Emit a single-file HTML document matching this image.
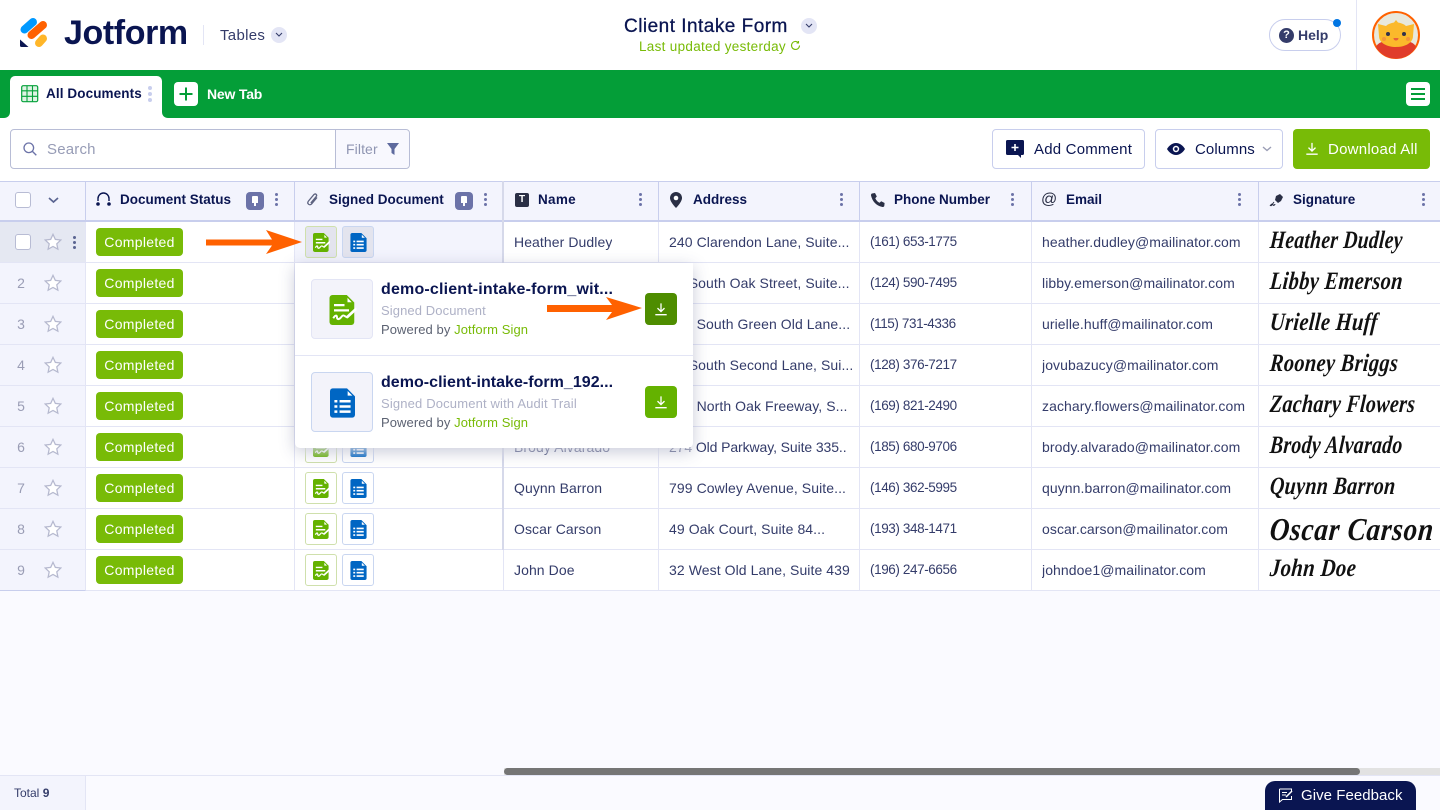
<!DOCTYPE html>
<html><head><meta charset="utf-8"><title>Client Intake Form</title>
<style>
*{box-sizing:border-box}
html,body{margin:0;padding:0;width:1440px;height:810px;overflow:hidden;background:#fafaff;font-family:"Liberation Sans",sans-serif;color:#0a1551}
.a{position:absolute}
.t{position:absolute;white-space:nowrap}
svg{display:block;position:absolute;overflow:visible}
.hd{position:absolute;top:181px;height:41px;background:#f3f4fd;border-top:1px solid #c8ceed;border-bottom:2px solid #c8ceed;border-right:1px solid #c8ceed}
.hl{position:absolute;top:9px;font-size:13.500px;line-height:18px;font-weight:bold;color:#0a1551;white-space:nowrap;letter-spacing:0}
.dots{position:absolute;width:3px;height:3px;border-radius:50%;background:#6c73a8;box-shadow:0 5px 0 #6c73a8,0 10px 0 #6c73a8}
.pin{position:absolute;top:10px;width:18px;height:18px;border-radius:4px;background:#6c73a8}
.pin:before{content:"";position:absolute;left:6px;top:4px;width:6px;height:7px;background:#fff;border-radius:1px 1px 0 0}
.pin:after{content:"";position:absolute;left:8px;top:10px;width:2px;height:4px;background:#fff}
.row{position:absolute;left:0;width:1440px;height:41px;background:#fff;border-bottom:1px solid #e3e5f5}
.rh{position:absolute;left:0;top:0;width:86px;height:41px;background:#f3f4fd;border-right:1px solid #e3e5f5;border-bottom:1px solid #e3e5f5}
.n{position:absolute;left:11px;width:20px;text-align:center;top:11px;font-size:14px;line-height:18px;color:#9a9db5}
.badge{position:absolute;left:96px;top:6px;width:87px;height:28px;border-radius:4px;background:#78bb07;color:#fff;font-size:14px;line-height:28px;text-align:center;letter-spacing:.3px}
.ib{position:absolute;top:4px;width:32px;height:32px;border-radius:3px;background:#fff}
.ib.g{left:305px;border:1px solid #cfe0ac}
.ib.b{left:342px;border:1px solid #c9d6f0}
.ib svg{left:7px;top:6px}
.v{position:absolute;top:0;width:1px;height:41px;background:#e3e5f5}
.d{position:absolute;top:11px;font-size:14px;line-height:18px;color:#343c6a;white-space:nowrap;letter-spacing:.08px;overflow:hidden}
.p{left:870px;font-size:13.500px;letter-spacing:-.4px}
.s{position:absolute;left:1270px;top:0;font-family:"Liberation Serif",serif;font-style:italic;font-weight:bold;font-size:25px;line-height:38px;color:#111;white-space:nowrap;letter-spacing:.4px;transform-origin:0 50%;transform:scaleX(.8) skewX(-6deg)}
.btn{position:absolute;top:129px;height:40px;border:1px solid #c8ceed;border-radius:4px;background:#fff}
.pi{position:absolute;left:16px;width:62px;height:60px;border-radius:4px;background:#f3f3fa;border:1px solid #e3e5f5}
.dl{position:absolute;left:350px;width:32px;height:32px;border-radius:4px;background:#64b200}
</style></head><body>
<svg width="0" height="0" style="position:absolute">
<defs>
<symbol id="gd" viewBox="0 0 18 20"><path fill="#64b200" d="M2 0h9.500L16.500 5V18a2 2 0 0 1-2 2H2a2 2 0 0 1-2-2V2a2 2 0 0 1 2-2z"/><path fill="#fff" d="M12 1.800 14.800 4.800H12z"/><path fill="#fff" d="M3 6h7v1.500H3zM3 9.500h10V11H3z"/><path fill="none" stroke="#fff" stroke-width="1.300" d="M2.500 15.500c1.500-2.500 2.500-2 2.500-.5s1.500 1.500 3-.5 2 0 4 .5"/><path fill="none" stroke="#fff" stroke-width="1.800" d="M11.500 15 18 9"/></symbol>
<symbol id="bd" viewBox="0 0 17 20"><path fill="#0066c3" d="M2 0h9.500L17 5.500V18a2 2 0 0 1-2 2H2a2 2 0 0 1-2-2V2a2 2 0 0 1 2-2z"/><path fill="#fff" d="M12 1.800 15.200 5H12z"/><path fill="#fff" d="M3 8h2v1.700H3zM6.500 8h7.500v1.700H6.500zM3 11.500h2v1.700H3zM6.500 11.500h7.500v1.700H6.500zM3 15h2v1.700H3zM6.500 15h7.500v1.700H6.500z"/></symbol>
<symbol id="st" viewBox="0 0 20 20"><path fill="#fff" stroke="#b6b9cf" stroke-width="1.400" d="M10 1.500l2.600 5.600 6 .7-4.400 4.200 1.200 6L10 15l-5.400 3 1.200-6L1.400 7.800l6-.7z"/></symbol>
<symbol id="dn" viewBox="0 0 16 16"><path fill="none" stroke="#fff" stroke-width="1.500" d="M8 1.500v9M4 7l4 4 4-4M1.500 14.500h13"/></symbol>
</defs></svg>

<!-- top header -->
<div class="a" style="left:0;top:0;width:1440px;height:70px;background:#fff"></div>
<svg style="left:18px;top:15px" width="32" height="34" viewBox="0 0 32 34">
<path stroke="#0099ff" stroke-width="8" stroke-linecap="round" d="M6.500 14.500 15 7"/>
<path stroke="#ff6100" stroke-width="8" stroke-linecap="round" d="M13.500 20 25 10"/>
<path stroke="#ffb629" stroke-width="8" stroke-linecap="round" d="M21 28 25 23.500"/>
<path fill="#0a1551" d="M2 24.500 10.500 32H3.500A1.500 1.500 0 0 1 2 30.500z"/>
</svg>
<div class="t" style="left:64px;top:15px;font-size:34px;line-height:36px;font-weight:bold;letter-spacing:-.4px">Jotform</div>
<div class="a" style="left:203px;top:25px;width:1px;height:20px;background:#e3e5f5"></div>
<div class="t" style="left:220px;top:27px;font-size:15px;line-height:18px;color:#343c6a;letter-spacing:.3px">Tables</div>
<div class="a" style="left:271px;top:27px;width:16px;height:16px;border-radius:50%;background:#e3e5f5"></div>
<svg style="left:275px;top:32px" width="8" height="6" viewBox="0 0 8 6"><path fill="none" stroke="#343c6a" stroke-width="1.100" d="M1 1l3 3 3-3"/></svg>

<div class="t" style="left:624px;top:15px;font-size:19px;line-height:23px;letter-spacing:.48px;-webkit-text-stroke:.3px #0a1551">Client Intake Form</div>
<div class="a" style="left:801px;top:18px;width:16px;height:16px;border-radius:50%;background:#e3e5f5"></div>
<svg style="left:805px;top:23px" width="8" height="6" viewBox="0 0 8 6"><path fill="none" stroke="#343c6a" stroke-width="1.100" d="M1 1l3 3 3-3"/></svg>
<div class="t" style="left:639px;top:38px;font-size:13.500px;line-height:17px;color:#78bb07;letter-spacing:.3px">Last updated yesterday</div>
<svg style="left:790px;top:40px" width="11" height="11" viewBox="0 0 11 11"><path fill="none" stroke="#78bb07" stroke-width="1.100" d="M9.500 5.500a4 4 0 1 1-1.200-2.900M8.500 1v2h-2"/></svg>

<div class="a" style="left:1269px;top:19px;width:72px;height:32px;border-radius:16px;border:1px solid #c8ceed;background:#fff"></div>
<div class="a" style="left:1279px;top:28px;width:15px;height:15px;border-radius:50%;background:#343c6a;color:#fff;font-size:11px;line-height:15px;text-align:center;font-weight:bold">?</div>
<div class="t" style="left:1298px;top:26px;font-size:14px;line-height:18px;color:#343c6a;font-weight:bold">Help</div>
<div class="a" style="left:1333px;top:19px;width:8px;height:8px;border-radius:50%;background:#0075e3"></div>
<div class="a" style="left:1356px;top:0;width:1px;height:70px;background:#e3e5f5"></div>
<svg style="left:1372px;top:11px" width="48" height="48" viewBox="0 0 48 48">
<circle cx="24" cy="24" r="23" fill="#e8e8dc" stroke="#ff6100" stroke-width="2"/>
<path fill="#e03c2a" d="M4 36Q6 31 14 30H34Q42 31 44 36A23 23 0 0 1 4 36z"/>
<path fill="#fbb92b" d="M6 13l8 2c2-2 5-3 8-3.500L24 9l2 2.500c3 .5 6 1.500 8 3.500l8-2-1 12c0 7-8 11-17 11S7 32 7 25z"/>
<circle cx="16" cy="23" r="2" fill="#33324a"/><circle cx="32" cy="23" r="2" fill="#33324a"/>
<path fill="#e8603a" d="M21.500 27h5c0 1.500-1 2.500-2.500 2.500s-2.500-1-2.500-2.500z"/>
<circle cx="12" cy="28" r="2" fill="#f5963a"/><circle cx="36" cy="28" r="2" fill="#f5963a"/>
</svg>

<!-- green bar -->
<div class="a" style="left:0;top:70px;width:1440px;height:48px;background:#049e38"></div>
<div class="a" style="left:10px;top:76px;width:152px;height:42px;background:#fff;border-radius:5px 5px 0 0"></div>
<svg style="left:4px;top:112px" width="6" height="6"><path fill="#fff" d="M6 0v6H0c3 0 6-2 6-6z"/></svg>
<svg style="left:162px;top:112px" width="6" height="6"><path fill="#fff" d="M0 0v6h6C3 6 0 4 0 0z"/></svg>
<svg style="left:21px;top:85px" width="18" height="18" viewBox="0 0 18 18"><rect x=".7" y=".7" width="16" height="16" rx="1.500" fill="#dff3e5" stroke="#04a13a" stroke-width="1.200"/><path fill="none" stroke="#04a13a" stroke-width="1.100" d="M.7 5.800h16M.7 11.300h16M6 .7v16M11.500 .7v16"/></svg>
<div class="t" style="left:46px;top:85px;font-size:13.500px;line-height:18px;font-weight:bold;letter-spacing:.1px">All Documents</div>
<div class="a" style="left:148px;top:86px;width:4px;height:4px;border-radius:50%;background:#c8ceed;box-shadow:0 6px 0 #c8ceed,0 12px 0 #c8ceed"></div>
<div class="a" style="left:174px;top:82px;width:24px;height:24px;border-radius:4px;background:#fff"></div>
<svg style="left:179px;top:87px" width="14" height="14"><path stroke="#049e38" stroke-width="2" d="M7 .5v13M.5 7h13"/></svg>
<div class="t" style="left:207px;top:85px;font-size:14px;line-height:18px;font-weight:bold;color:#fff;letter-spacing:-.2px">New Tab</div>
<div class="a" style="left:1406px;top:82px;width:24px;height:24px;border-radius:4px;background:#fff"></div>
<svg style="left:1410px;top:88px" width="16" height="12"><path stroke="#049e38" stroke-width="2" d="M1 1h14M1 6h14M1 11h14"/></svg>

<!-- toolbar -->
<div class="a" style="left:0;top:118px;width:1440px;height:63px;background:#fff"></div>
<div class="a" style="left:10px;top:129px;width:400px;height:40px;border:1px solid #b8bdd6;border-radius:4px;background:#fff"></div>
<div class="a" style="left:335px;top:130px;width:74px;height:38px;background:#f8f8fe;border-left:1px solid #b8bdd6;border-radius:0 4px 4px 0"></div>
<svg style="left:23px;top:142px" width="14" height="14" viewBox="0 0 14 14"><circle cx="5.800" cy="5.800" r="4.800" fill="none" stroke="#6c73a8" stroke-width="1.300"/><path stroke="#6c73a8" stroke-width="1.400" d="M9.300 9.300l4 4"/></svg>
<div class="t" style="left:47px;top:140px;font-size:15px;line-height:19px;color:#979cb6;letter-spacing:.2px">Search</div>
<div class="t" style="left:346px;top:140px;font-size:14px;line-height:18px;color:#8f95b2;letter-spacing:.1px">Filter</div>
<svg style="left:387px;top:143px" width="12" height="12" viewBox="0 0 12 12"><path fill="#5e6a9e" d="M0 0h12L7.500 6v6l-3-2V6z"/></svg>

<div class="btn" style="left:992px;width:153px"></div>
<svg style="left:1006px;top:140px" width="19" height="19" viewBox="0 0 19 19"><path fill="#0a1551" d="M1.500 0h15A1.500 1.500 0 0 1 18 1.500v12a1.500 1.500 0 0 1-1.500 1.500H15v3l-3-3H1.500A1.500 1.500 0 0 1 0 13.500v-12A1.500 1.500 0 0 1 1.500 0z"/><path stroke="#fff" stroke-width="1.600" d="M9 4v7M5.500 7.500h7"/></svg>
<div class="t" style="left:1034px;top:141px;font-size:15px;line-height:18px;letter-spacing:.2px">Add Comment</div>
<div class="btn" style="left:1155px;width:128px"></div>
<svg style="left:1167px;top:143px" width="18" height="12" viewBox="0 0 18 12"><path fill="#0a1551" d="M9 0c4 0 7.200 3 9 6-1.800 3-5 6-9 6s-7.200-3-9-6c1.800-3 5-6 9-6z"/><circle cx="9" cy="6" r="3.200" fill="#fff"/><circle cx="9" cy="6" r="1.700" fill="#0a1551"/></svg>
<div class="t" style="left:1195px;top:141px;font-size:15px;line-height:18px;letter-spacing:.1px">Columns</div>
<svg style="left:1262px;top:146px" width="10" height="6"><path fill="none" stroke="#9a9db5" stroke-width="1.400" d="M1 1l4 3.500L9 1"/></svg>
<div class="a" style="left:1293px;top:129px;width:137px;height:40px;border-radius:4px;background:#78bb07"></div>
<svg style="left:1305px;top:141px" width="14" height="15" viewBox="0 0 16 16"><use href="#dn"/></svg>
<div class="t" style="left:1328px;top:141px;font-size:15px;line-height:18px;color:#fff;letter-spacing:.25px">Download All</div>

<!-- table header -->
<div class="hd" style="left:0;width:86px"></div>
<div class="a" style="left:15px;top:192px;width:16px;height:16px;border:1.500px solid #b8bcd4;border-radius:3px;background:#fff"></div>
<svg style="left:48px;top:197px" width="11" height="7"><path fill="none" stroke="#5a6491" stroke-width="1.700" d="M1 1l4.500 4L10 1"/></svg>
<div class="hd" style="left:86px;width:209px">
 <svg style="left:10px;top:10px" width="15" height="15" viewBox="0 0 15 15"><path fill="none" stroke="#0a1551" stroke-width="1.400" d="M2 9V6.500a5.500 5.500 0 0 1 11 0V9"/><circle cx="2" cy="12" r="1.800" fill="#0a1551"/><circle cx="13" cy="12" r="1.800" fill="#0a1551"/></svg>
 <div class="hl" style="left:34px">Document Status</div><div class="pin" style="left:160px"></div><div class="dots" style="left:189px;top:11px"></div>
</div>
<div class="hd" style="left:295px;width:209px;border-right:2px solid #c8ceed">
 <svg style="left:11px;top:10px" width="13" height="15" viewBox="0 0 13 15"><path fill="none" stroke="#5e6380" stroke-width="1.300" d="M11 5.500 5.500 12c-2 2-5-.5-3-3l5.500-6.500c1.500-1.500 3.500.5 2.200 2L4.800 11"/></svg>
 <div class="hl" style="left:34px">Signed Document</div><div class="pin" style="left:160px"></div><div class="dots" style="left:189px;top:11px"></div>
</div>
<div class="hd" style="left:504px;width:155px">
 <div class="a" style="left:11px;top:11px;width:14px;height:14px;border-radius:2px;background:#2a2f45;color:#fff;font-size:10px;line-height:14px;text-align:center;font-weight:bold">T</div>
 <div class="hl" style="left:34px;letter-spacing:.3px">Name</div><div class="dots" style="left:135px;top:11px"></div>
</div>
<div class="hd" style="left:659px;width:201px">
 <svg style="left:11px;top:10px" width="12" height="16" viewBox="0 0 12 16"><path fill="#2a2f45" d="M6 0a6 6 0 0 1 6 6c0 4-6 10-6 10S0 10 0 6a6 6 0 0 1 6-6z"/><circle cx="6" cy="6" r="2.300" fill="#fff"/></svg>
 <div class="hl" style="left:34px">Address</div><div class="dots" style="left:181px;top:11px"></div>
</div>
<div class="hd" style="left:860px;width:172px">
 <svg style="left:11px;top:11px" width="14" height="14" viewBox="0 0 14 14"><path fill="#2a2f45" d="M1 .5 4 0l1.800 3.500L4.300 5.200c.7 1.800 2.400 3.700 4.300 4.500l1.600-1.500 3.400 1.800-.3 2.900c-.2 1-1.200 1.300-2.300 1C5 12.500 1.500 8.500 0 2.500 0 1.500.2.800 1 .5z"/></svg>
 <div class="hl" style="left:34px">Phone Number</div><div class="dots" style="left:151px;top:11px"></div>
</div>
<div class="hd" style="left:1032px;width:227px">
 <div class="a" style="left:9px;top:8px;font-size:16px;line-height:20px;color:#2a2f45">@</div>
 <div class="hl" style="left:34px">Email</div><div class="dots" style="left:206px;top:11px"></div>
</div>
<div class="hd" style="left:1259px;width:181px;border-right:0">
 <svg style="left:11px;top:11px" width="14" height="14" viewBox="0 0 14 14"><path fill="#2a2f45" d="M6 3 10 1l3 3-2 4-3 2-3-3z"/><path fill="none" stroke="#2a2f45" d="M0 13c2-3 3-2 3-1s2 0 2-1M4 9l-3 4"/></svg>
 <div class="hl" style="left:34px">Signature</div><div class="dots" style="left:163px;top:11px"></div>
</div>

<!-- rows -->
<div class="row" style="top:222px"><div class="rh" style="background:#e5e8f2"><div class="a" style="left:15px;top:12px;width:16px;height:16px;border:1.500px solid #b8bcd4;border-radius:3px;background:#fff"></div><svg style="left:44px;top:11px" width="18" height="18"><use href="#st"/></svg><div class="dots" style="left:73px;top:14px;background:#5a6491;box-shadow:0 5px 0 #5a6491,0 10px 0 #5a6491"></div></div><div class="a" style="left:295px;top:0;width:208px;height:40px;background:#f3f4fd"></div><div class="badge">Completed</div><div class="ib g" style="background:#e3e4ee"><svg width="17" height="19"><use href="#gd"/></svg></div><div class="ib b" style="background:#e3e4ee"><svg width="17" height="19"><use href="#bd"/></svg></div><div class="d" style="left:514px">Heather Dudley</div><div class="d" style="left:669px">240 Clarendon Lane, Suite...</div><div class="d p">(161) 653-1775</div><div class="d" style="left:1042px">heather.dudley@mailinator.com</div><div class="s" style="transform:scaleX(.78) skewX(-6deg)">Heather Dudley</div><div class="v" style="left:294px"></div><div class="v" style="left:503px"></div><div class="v" style="left:658px"></div><div class="v" style="left:859px"></div><div class="v" style="left:1031px"></div><div class="v" style="left:1258px"></div></div>

<div class="row" style="top:263px"><div class="rh"><div class="n">2</div><svg style="left:44px;top:11px" width="18" height="18"><use href="#st"/></svg></div><div class="badge">Completed</div><div class="d" style="left:669px">12 South Oak Street, Suite...</div><div class="d p">(124) 590-7495</div><div class="d" style="left:1042px">libby.emerson@mailinator.com</div><div class="s" style="transform:scaleX(.816) skewX(-6deg)">Libby Emerson</div><div class="v" style="left:294px"></div><div class="v" style="left:859px"></div><div class="v" style="left:1031px"></div><div class="v" style="left:1258px"></div></div>

<div class="row" style="top:304px"><div class="rh"><div class="n">3</div><svg style="left:44px;top:11px" width="18" height="18"><use href="#st"/></svg></div><div class="badge">Completed</div><div class="d" style="left:669px">123 South Green Old Lane...</div><div class="d p">(115) 731-4336</div><div class="d" style="left:1042px">urielle.huff@mailinator.com</div><div class="s" style="transform:scaleX(.82) skewX(-6deg)">Urielle Huff</div><div class="v" style="left:294px"></div><div class="v" style="left:859px"></div><div class="v" style="left:1031px"></div><div class="v" style="left:1258px"></div></div>

<div class="row" style="top:345px"><div class="rh"><div class="n">4</div><svg style="left:44px;top:11px" width="18" height="18"><use href="#st"/></svg></div><div class="badge">Completed</div><div class="d" style="left:669px">12 South Second Lane, Sui...</div><div class="d p">(128) 376-7217</div><div class="d" style="left:1042px">jovubazucy@mailinator.com</div><div class="s" style="transform:scaleX(.815) skewX(-6deg)">Rooney Briggs</div><div class="v" style="left:294px"></div><div class="v" style="left:859px"></div><div class="v" style="left:1031px"></div><div class="v" style="left:1258px"></div></div>

<div class="row" style="top:386px"><div class="rh"><div class="n">5</div><svg style="left:44px;top:11px" width="18" height="18"><use href="#st"/></svg></div><div class="badge">Completed</div><div class="d" style="left:669px">123 North Oak Freeway, S...</div><div class="d p">(169) 821-2490</div><div class="d" style="left:1042px">zachary.flowers@mailinator.com</div><div class="s">Zachary Flowers</div><div class="v" style="left:294px"></div><div class="v" style="left:859px"></div><div class="v" style="left:1031px"></div><div class="v" style="left:1258px"></div></div>

<div class="row" style="top:427px"><div class="rh"><div class="n">6</div><svg style="left:44px;top:11px" width="18" height="18"><use href="#st"/></svg></div><div class="badge">Completed</div><div class="ib g"><svg width="17" height="19"><use href="#gd"/></svg></div><div class="ib b"><svg width="17" height="19"><use href="#bd"/></svg></div><div class="d" style="left:514px">Brody Alvarado</div><div class="d" style="left:669px;letter-spacing:-.1px">274 Old Parkway, Suite 335..</div><div class="d p">(185) 680-9706</div><div class="d" style="left:1042px">brody.alvarado@mailinator.com</div><div class="s" style="transform:scaleX(.79) skewX(-6deg)">Brody Alvarado</div><div class="v" style="left:294px"></div><div class="v" style="left:503px"></div><div class="v" style="left:658px"></div><div class="v" style="left:859px"></div><div class="v" style="left:1031px"></div><div class="v" style="left:1258px"></div></div>

<div class="row" style="top:468px"><div class="rh"><div class="n">7</div><svg style="left:44px;top:11px" width="18" height="18"><use href="#st"/></svg></div><div class="badge">Completed</div><div class="ib g"><svg width="17" height="19"><use href="#gd"/></svg></div><div class="ib b"><svg width="17" height="19"><use href="#bd"/></svg></div><div class="d" style="left:514px">Quynn Barron</div><div class="d" style="left:669px">799 Cowley Avenue, Suite...</div><div class="d p">(146) 362-5995</div><div class="d" style="left:1042px">quynn.barron@mailinator.com</div><div class="s">Quynn Barron</div><div class="v" style="left:294px"></div><div class="v" style="left:503px"></div><div class="v" style="left:658px"></div><div class="v" style="left:859px"></div><div class="v" style="left:1031px"></div><div class="v" style="left:1258px"></div></div>

<div class="row" style="top:509px"><div class="rh"><div class="n">8</div><svg style="left:44px;top:11px" width="18" height="18"><use href="#st"/></svg></div><div class="badge">Completed</div><div class="ib g"><svg width="17" height="19"><use href="#gd"/></svg></div><div class="ib b"><svg width="17" height="19"><use href="#bd"/></svg></div><div class="d" style="left:514px">Oscar Carson</div><div class="d" style="left:669px">49 Oak Court, Suite 84...</div><div class="d p">(193) 348-1471</div><div class="d" style="left:1042px">oscar.carson@mailinator.com</div><div class="s" style="font-size:32px;top:1px;letter-spacing:.9px;transform:scaleX(.85) skewX(-6deg)">Oscar Carson</div><div class="v" style="left:294px"></div><div class="v" style="left:503px"></div><div class="v" style="left:658px"></div><div class="v" style="left:859px"></div><div class="v" style="left:1031px"></div><div class="v" style="left:1258px"></div></div>

<div class="row" style="top:550px"><div class="rh" style="border-bottom-color:#c8ceed"><div class="n">9</div><svg style="left:44px;top:11px" width="18" height="18"><use href="#st"/></svg></div><div class="badge">Completed</div><div class="ib g"><svg width="17" height="19"><use href="#gd"/></svg></div><div class="ib b"><svg width="17" height="19"><use href="#bd"/></svg></div><div class="d" style="left:514px">John Doe</div><div class="d" style="left:669px">32 West Old Lane, Suite 439</div><div class="d p">(196) 247-6656</div><div class="d" style="left:1042px">johndoe1@mailinator.com</div><div class="s" style="transform:scaleX(.83) skewX(-6deg)">John Doe</div><div class="v" style="left:294px"></div><div class="v" style="left:503px"></div><div class="v" style="left:658px"></div><div class="v" style="left:859px"></div><div class="v" style="left:1031px"></div><div class="v" style="left:1258px"></div></div>

<div class="a" style="left:502px;top:181px;width:2px;height:369px;background:#d6d9ea"></div>

<!-- popup -->
<div class="a" style="left:295px;top:448px;width:398px;height:12px;background:linear-gradient(rgba(255,255,255,.65),rgba(255,255,255,0))"></div>
<div class="a" style="left:295px;top:263px;width:398px;height:185px;background:#fff;border-radius:0 0 5px 5px;box-shadow:0 4px 16px rgba(60,70,120,.28)">
 <div class="pi" style="top:16px"><svg style="left:17px;top:15px" width="28" height="30" viewBox="0 0 18 20"><use href="#gd"/></svg></div>
 <div class="t" style="left:86px;top:17px;font-size:16px;line-height:20px;font-weight:bold;letter-spacing:.18px">demo-client-intake-form_wit...</div>
 <div class="t" style="left:86px;top:39px;font-size:13px;line-height:17px;color:#aeb1c6;letter-spacing:.1px">Signed Document</div>
 <div class="t" style="left:86px;top:58px;font-size:13px;line-height:17px;color:#5c6272;letter-spacing:.08px">Powered by <span style="color:#78bb07">Jotform Sign</span></div>
 <div class="dl" style="top:30px;background:#4e8d00"><svg style="left:9px;top:9px" width="14" height="14" viewBox="0 0 16 16"><use href="#dn"/></svg></div>
 <div class="a" style="left:0;top:92px;width:398px;height:1px;background:#e3e5f5"></div>
 <div class="pi" style="top:109px;border-color:#c9d6f0"><svg style="left:18px;top:15px" width="25" height="30" viewBox="0 0 17 20"><use href="#bd"/></svg></div>
 <div class="t" style="left:86px;top:110px;font-size:16px;line-height:20px;font-weight:bold;letter-spacing:.03px">demo-client-intake-form_192...</div>
 <div class="t" style="left:86px;top:132px;font-size:13px;line-height:17px;color:#aeb1c6;letter-spacing:.16px">Signed Document with Audit Trail</div>
 <div class="t" style="left:86px;top:151px;font-size:13px;line-height:17px;color:#5c6272;letter-spacing:.08px">Powered by <span style="color:#78bb07">Jotform Sign</span></div>
 <div class="dl" style="top:123px"><svg style="left:9px;top:9px" width="14" height="14" viewBox="0 0 16 16"><use href="#dn"/></svg></div>
</div>

<!-- arrows -->
<svg style="left:0;top:0" width="1440" height="810"><path fill="#ff6100" d="M206 239.500H272L266 230 302 242 266 254 272 245.500H206z"/><path fill="#ff6100" d="M547 305H612L606 297 642 308 606 320 612 312H547z"/></svg>

<!-- footer -->
<div class="a" style="left:504px;top:768px;width:936px;height:7px;background:#e2e2e2"></div>
<div class="a" style="left:504px;top:768px;width:856px;height:7px;background:#757575;border-radius:4px"></div>
<div class="a" style="left:0;top:775px;width:1440px;height:1px;background:#e3e5f5"></div>
<div class="a" style="left:0;top:776px;width:86px;height:34px;background:#f3f4fd;border-right:1px solid #e3e5f5"></div>
<div class="t" style="left:14px;top:785px;font-size:12px;line-height:16px;color:#343c6a">Total <b>9</b></div>
<div class="a" style="left:1265px;top:781px;width:151px;height:29px;background:#0a1551;border-radius:10px 10px 0 0"></div>
<svg style="left:1279px;top:788px" width="15" height="15" viewBox="0 0 15 15"><path fill="none" stroke="#fff" stroke-width="1" d="M.5 1h12v3M.5 1v13l3-2.500h9V8M3 4.500h5M3 7h4"/><path stroke="#fff" stroke-width="1.500" d="M7 9l6-6"/></svg>
<div class="t" style="left:1301px;top:787px;font-size:15px;line-height:18px;color:#fff;letter-spacing:.05px">Give Feedback</div>
</body></html>
